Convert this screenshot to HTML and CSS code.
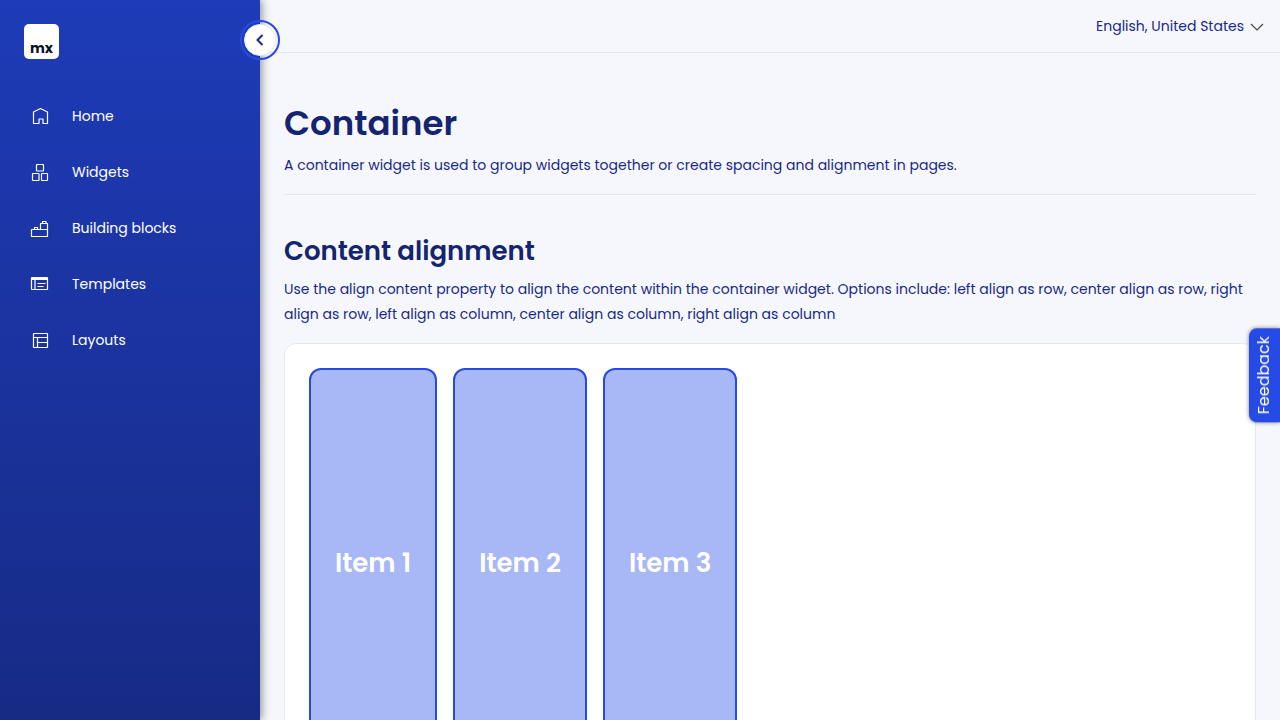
FILE: index.html
```html
<!DOCTYPE html>
<html lang="en">
<head>
<meta charset="utf-8">
<meta name="viewport" content="width=device-width, initial-scale=1">
<title>Container</title>
<link rel="stylesheet" href="styles.css">
</head>
<body class="app">
<aside class="sidebar">
  <a class="logo" href="#" aria-label="mx home">mx</a>
  <nav class="nav" aria-label="Main">
    <a class="nav-link" href="#"><svg class="nav-icon" viewBox="0 0 20 20" aria-hidden="true"><path d="M3.500 17.500V6L10.500 2.500l7 3.500V17.500h-4.500v-4.500h-4v4.500z"/></svg>Home</a>
    <a class="nav-link" href="#"><svg class="nav-icon" viewBox="0 0 20 20" aria-hidden="true"><rect x="6.500" y="2.500" width="7" height="6.500" rx=".5"/><rect x="2.500" y="11.500" width="6.500" height="7" rx=".5"/><rect x="11.500" y="11.500" width="6" height="7" rx=".5"/></svg>Widgets</a>
    <a class="nav-link" href="#"><svg class="nav-icon" viewBox="0 0 20 20" aria-hidden="true"><path d="M1.500 11.500h9v-6h7v13h-16zM10.500 11.500h7M4.500 11.500v-2h3v2M12.500 5.500v-2h3.500v2"/></svg>Building blocks</a>
    <a class="nav-link" href="#"><svg class="nav-icon" viewBox="0 0 20 20" aria-hidden="true"><rect x="1.500" y="3.500" width="16" height="12" rx=".5"/><path d="M1.500 4.500h16M1.500 5.500h16M5 5v10.500M7.500 9.500h8M7.500 12.500h6"/></svg>Templates</a>
    <a class="nav-link" href="#"><svg class="nav-icon" viewBox="0 0 20 20" aria-hidden="true"><rect x="3.500" y="3.500" width="14" height="14" rx=".5"/><path d="M3.500 7.500h14M7.500 7.500v10M7.500 12.500h10"/></svg>Layouts</a>
  </nav>
  <button class="toggle" type="button" aria-label="Collapse sidebar"><span class="toggle-face"><svg class="toggle-icon" viewBox="0 0 16 16" aria-hidden="true"><path d="M10.500 3 5.500 8l5 5"/></svg></span></button>
</aside>
<div class="page">
  <header class="topbar">
    <button class="language" type="button">English, United States<svg class="language-icon" viewBox="0 0 14 14" aria-hidden="true"><path d="M1 4l6 6 6-6"/></svg></button>
  </header>
  <main class="content">
    <header class="intro">
      <h1 class="title">Container</h1>
      <p class="text">A container widget is used to group widgets together or create spacing and alignment in pages.</p>
    </header>
    <section class="section">
      <h2 class="subtitle">Content alignment</h2>
      <p class="text">Use the align content property to align the content within the container widget. Options include: left align as row, center align as row, right align as row, left align as column, center align as column, right align as column</p>
      <div class="card">
        <div class="item">Item 1</div>
        <div class="item">Item 2</div>
        <div class="item">Item 3</div>
      </div>
    </section>
  </main>
</div>
<button class="feedback" type="button">Feedback</button>
</body>
</html>
```
FILE: styles.css
```css
* { box-sizing: border-box; }
.app {
  margin: 0;
  display: flex;
  height: 100vh;
  overflow: hidden;
  background: #f6f7fc;
  color: #18298a;
  font: 14px/25px Poppins, Inter, sans-serif;
}
button { font: inherit; color: inherit; border: 0; background: none; padding: 0; cursor: pointer; }
.sidebar {
  position: relative;
  z-index: 1;
  flex: 0 0 260px;
  padding: 24px 0;
  background: linear-gradient(180deg, #1e3bb8, #172b85);
  box-shadow: 2px 0 8px rgba(0, 0, 0, .4);
}
.logo {
  display: flex;
  align-items: flex-end;
  justify-content: center;
  width: 35px;
  height: 35px;
  margin-left: 24px;
  padding-bottom: 2px;
  border-radius: 5px;
  background: #fff;
  color: #0a1326;
  font-size: 14px;
  font-weight: 700;
  line-height: 18px;
  text-decoration: none;
}
.nav { display: flex; flex-direction: column; margin-top: 29px; }
.nav-link {
  display: flex;
  align-items: center;
  gap: 22px;
  height: 56px;
  padding-left: 30px;
  color: #fff;
  text-decoration: none;
}
.nav-icon { width: 20px; height: 20px; fill: none; stroke: #fff; stroke-width: 1.2; stroke-linejoin: round; }
.toggle {
  position: absolute;
  top: 20px;
  right: -20px;
  width: 40px;
  height: 40px;
  padding: 2px;
  border: 2px solid #264ae5;
  border-radius: 50%;
}
.toggle-face {
  display: flex;
  align-items: center;
  justify-content: center;
  width: 32px;
  height: 32px;
  border: 1px solid #e7e9f5;
  border-radius: 50%;
  background: #fff;
}
.toggle-icon { width: 16px; height: 16px; fill: none; stroke: #18298a; stroke-width: 2; }
.page { flex: 1; min-width: 0; overflow: auto; scrollbar-width: none; }
.topbar { display: flex; justify-content: flex-end; padding: 14px 16px 13px; border-bottom: 1px solid #e4e6f5; }
.language { display: flex; align-items: center; gap: 6px; }
.language-icon { width: 14px; height: 14px; fill: none; stroke: #444; stroke-width: 1.2; }
.content { padding: 46px 24px 24px; }
.intro { padding-bottom: 16px; border-bottom: 1px solid #e4e6f5; }
.title { margin: 0 0 6px; color: #14246f; font-size: 34px; font-weight: 600; line-height: 48px; }
.section { padding-top: 36px; }
.subtitle { margin: 0 0 6px; color: #14246f; font-size: 26px; font-weight: 600; line-height: 40px; }
.text { margin: 0; }
.card {
  display: flex;
  gap: 16px;
  margin-top: 16px;
  padding: 24px;
  border: 1px solid #e4e6f5;
  border-radius: 12px;
  background: #fff;
}
.item {
  display: flex;
  align-items: center;
  min-height: 390px;
  padding: 24px;
  border: 2px solid #264ae5;
  border-radius: 12px;
  background: #a8b7f5;
  color: #fff;
  font-size: 26px;
  font-weight: 600;
}
.feedback {
  position: fixed;
  z-index: 2;
  top: 328px;
  right: 0;
  padding: 8px 2px 8px 4px;
  border-radius: 0 8px 8px 0;
  background: #264ae5;
  box-shadow: 0 0 4px rgba(0, 0, 0, .5);
  color: #fff;
  font-size: 16px;
  writing-mode: vertical-rl;
  transform: rotate(180deg);
}
```
